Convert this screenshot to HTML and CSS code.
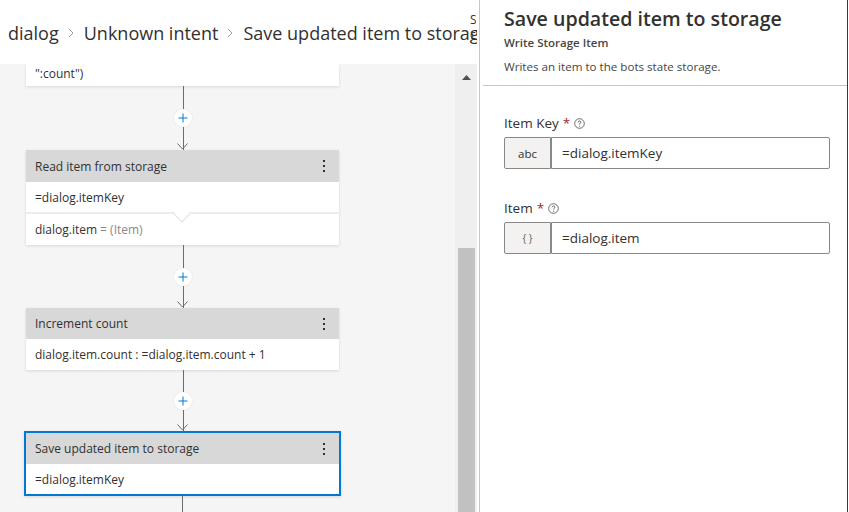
FILE: index.html
```html
<!DOCTYPE html>
<html lang="en">
<head>
<meta charset="utf-8">
<title>Save updated item to storage</title>
<link rel="stylesheet" href="styles.css">
</head>
<body>
<div class="app">
  <section class="left">
    <header class="topbar">
      <nav class="crumbs">
        <svg class="chev chev-first" width="6" height="10" viewBox="0 0 6 10"><path d="M1 1l4 4-4 4" fill="none" stroke="#a19f9d" stroke-width="1"/></svg>
        <span class="crumb">dialog</span>
        <svg class="chev" width="6" height="10" viewBox="0 0 6 10"><path d="M1 1l4 4-4 4" fill="none" stroke="#a19f9d" stroke-width="1"/></svg>
        <span class="crumb">Unknown intent</span>
        <svg class="chev" width="6" height="10" viewBox="0 0 6 10"><path d="M1 1l4 4-4 4" fill="none" stroke="#a19f9d" stroke-width="1"/></svg>
        <span class="crumb">Save updated item to storage</span>
      </nav>
      <div class="squeezed">Show code</div>
    </header>
    <div class="canvas">
      <div class="flow">
        <div class="card card-cut">
          <div class="row row-cut">":count")</div>
        </div>

        <div class="connector">
          <span class="seg"></span>
          <span class="plus"><svg width="10" height="10" viewBox="0 0 10 10"><path d="M5 0.5v9M0.5 5h9" stroke="#0078d4" stroke-width="1"/></svg></span>
          <span class="seg"></span>
          <svg class="arrow" width="11" height="7" viewBox="0 0 11 7"><path d="M0.5 0.5l5 5.5 5-5.5" fill="none" stroke="#6b6b6b" stroke-width="1"/></svg>
        </div>

        <div class="card">
          <div class="card-head"><span>Read item from storage</span>
            <svg class="kebab" width="4" height="14" viewBox="0 0 4 14"><rect x="1" y="1" width="2" height="2" fill="#323130"/><rect x="1" y="6" width="2" height="2" fill="#323130"/><rect x="1" y="11" width="2" height="2" fill="#323130"/></svg>
          </div>
          <div class="row row-notched">=dialog.itemKey<span class="notch"></span></div>
          <div class="row row-second">dialog.item <span class="muted">= (Item)</span></div>
        </div>

        <div class="connector c2">
          <span class="seg"></span>
          <span class="plus"><svg width="10" height="10" viewBox="0 0 10 10"><path d="M5 0.5v9M0.5 5h9" stroke="#0078d4" stroke-width="1"/></svg></span>
          <span class="seg"></span>
          <svg class="arrow" width="11" height="7" viewBox="0 0 11 7"><path d="M0.5 0.5l5 5.5 5-5.5" fill="none" stroke="#6b6b6b" stroke-width="1"/></svg>
        </div>

        <div class="card">
          <div class="card-head head-31"><span>Increment count</span>
            <svg class="kebab" width="4" height="14" viewBox="0 0 4 14"><rect x="1" y="1" width="2" height="2" fill="#323130"/><rect x="1" y="6" width="2" height="2" fill="#323130"/><rect x="1" y="11" width="2" height="2" fill="#323130"/></svg>
          </div>
          <div class="row row-31">dialog.item.count : =dialog.item.count + 1</div>
        </div>

        <div class="connector c3">
          <span class="seg"></span>
          <span class="plus"><svg width="10" height="10" viewBox="0 0 10 10"><path d="M5 0.5v9M0.5 5h9" stroke="#0078d4" stroke-width="1"/></svg></span>
          <span class="seg"></span>
          <svg class="arrow" width="11" height="7" viewBox="0 0 11 7"><path d="M0.5 0.5l5 5.5 5-5.5" fill="none" stroke="#6b6b6b" stroke-width="1"/></svg>
        </div>

        <div class="card card-selected">
          <div class="card-head head-30"><span>Save updated item to storage</span>
            <svg class="kebab" width="4" height="14" viewBox="0 0 4 14"><rect x="1" y="1" width="2" height="2" fill="#323130"/><rect x="1" y="6" width="2" height="2" fill="#323130"/><rect x="1" y="11" width="2" height="2" fill="#323130"/></svg>
          </div>
          <div class="row row-30">=dialog.itemKey</div>
        </div>
        <div class="tail"></div>
      </div>
      <div class="scrollbar">
        <svg class="scroll-up" width="9" height="5" viewBox="0 0 9 5"><path d="M0 5L4.5 0 9 5z" fill="#505050"/></svg>
        <div class="thumb"></div>
      </div>
    </div>
  </section>

  <aside class="panel">
    <div class="panel-head">
      <h1 class="title">Save updated item to storage</h1>
      <div class="subtitle">Write Storage Item</div>
      <p class="desc">Writes an item to the bots state storage.</p>
    </div>
    <div class="fields">
      <div class="field">
        <label class="label">Item Key <span class="req">*</span>
          <svg class="info" width="11" height="11" viewBox="0 0 11 11"><circle cx="5.5" cy="5.5" r="4.8" fill="none" stroke="#605e5c" stroke-width="0.9"/><path d="M4.1 4.3c0-0.8 0.6-1.4 1.4-1.4s1.4 0.6 1.4 1.3c0 0.9-1.3 1-1.3 2v0.3" fill="none" stroke="#605e5c" stroke-width="0.9"/><circle cx="5.6" cy="8.1" r="0.55" fill="#605e5c"/></svg>
        </label>
        <div class="input-row">
          <span class="addon">abc</span>
          <span class="input">=dialog.itemKey</span>
        </div>
      </div>
      <div class="field">
        <label class="label">Item <span class="req">*</span>
          <svg class="info" width="11" height="11" viewBox="0 0 11 11"><circle cx="5.5" cy="5.5" r="4.8" fill="none" stroke="#605e5c" stroke-width="0.9"/><path d="M4.1 4.3c0-0.8 0.6-1.4 1.4-1.4s1.4 0.6 1.4 1.3c0 0.9-1.3 1-1.3 2v0.3" fill="none" stroke="#605e5c" stroke-width="0.9"/><circle cx="5.6" cy="8.1" r="0.55" fill="#605e5c"/></svg>
        </label>
        <div class="input-row">
          <span class="addon addon-obj">{ }</span>
          <span class="input">=dialog.item</span>
        </div>
      </div>
    </div>
  </aside>
</div>
</body>
</html>
```

FILE: styles.css
```css
* { box-sizing: border-box; }
html, body { margin: 0; padding: 0; }
body {
  width: 849px;
  height: 512px;
  overflow: hidden;
  background: #ffffff;
  font-family: "Open Sans", "Noto Sans", sans-serif;
  color: #323130;
}
.app {
  display: flex;
  width: 849px;
  height: 512px;
}

/* ---------- left pane ---------- */
.left {
  width: 480px;
  flex: none;
  display: flex;
  flex-direction: column;
  padding-right: 2px;
  border-right: 1px solid #c8c6c4;
  background: #fff;
}
.topbar {
  position: relative;
  height: 64px;
  flex: none;
  display: flex;
  align-items: center;
  overflow: hidden;
}
.crumbs {
  flex: 1;
  display: flex;
  align-items: center;
  white-space: nowrap;
  overflow: hidden;
  margin-top: 1px;
  font-size: 18px;
  color: #323130;
}
.chev { flex: none; margin: 1px 10px 0 9px; }
.chev-first { margin-left: -5px; margin-right: 7px; }
.crumb { flex: none; }
.squeezed {
  position: absolute;
  left: 470px;
  top: 12px;
  width: 6px;
  overflow: hidden;
  font-size: 12px;
  line-height: 15px;
  color: #323130;
}

.canvas {
  flex: 1;
  display: flex;
  background: #f5f5f5;
  overflow: hidden;
}
.flow {
  flex: 1;
  display: flex;
  flex-direction: column;
  align-items: flex-start;
  padding-left: 26px;
}
.card {
  width: 313px;
  background: #fff;
  box-shadow: 0 1px 3px rgba(0, 0, 0, 0.12);
  font-size: 12px;
  flex: none;
}
.card-cut { height: 22px; }
.row {
  display: flex;
  align-items: center;
  padding-left: 9px;
  position: relative;
  background: #fff;
}
.row-cut { height: 19px; }
.card-head {
  height: 32px;
  background: #d8d8d8;
  display: flex;
  align-items: center;
  justify-content: space-between;
  padding: 0 13px 0 9px;
}
.head-31 { height: 31px; }
.head-30 { height: 31px; }
.kebab { display: block; }
.row-notched {
  height: 32px;
  border-bottom: 2px solid #ececec;
  z-index: 1;
}
.notch {
  position: absolute;
  left: 150px;
  bottom: -8px;
  width: 12px;
  height: 12px;
  background: #fff;
  border-right: 1px solid #e1e1e1;
  border-bottom: 1px solid #e1e1e1;
  transform: rotate(45deg);
}
.row-second { height: 31px; }
.muted { color: #8a8886; margin-left: 3px; }
.row-31 { height: 31px; }
.row-30 { height: 30px; }

.card-selected {
  width: 317px;
  margin-left: -2px;
  border: 2px solid #0078d4;
}

.connector {
  position: relative;
  width: 313px;
  height: 64px;
  display: flex;
  flex-direction: column;
  align-items: center;
  flex: none;
}
.c2 { height: 63px; }
.c3 { height: 61px; }
.seg {
  flex: 1;
  width: 1px;
  background: #6b6b6b;
  margin-left: 1px;
}
.plus {
  width: 18px;
  height: 18px;
  border-radius: 50%;
  background: #fff;
  display: flex;
  align-items: center;
  justify-content: center;
  margin-left: 1px;
  box-shadow: 0 0 2px rgba(0, 0, 0, 0.1);
}
.plus svg { display: block; }
.arrow {
  position: absolute;
  left: 151px;
  bottom: 0;
}
.tail {
  flex: 1;
  width: 1px;
  margin-left: 156px;
  background: #6b6b6b;
}

.scrollbar {
  width: 22px;
  flex: none;
  background: #efefef;
  display: flex;
  flex-direction: column;
  align-items: center;
  padding-top: 11px;
}
.scroll-up { display: block; }
.thumb {
  width: 17px;
  margin-top: 168px;
  flex: 1;
  background: #c1c1c1;
}

/* ---------- right panel ---------- */
.panel {
  flex: 1;
  border-right: 1px solid #3a3a3a;
  margin-right: 1px;
  display: flex;
  flex-direction: column;
}
.panel-head {
  margin-left: 3px;
  padding: 5px 0 10px 21px;
  border-bottom: 1px solid #c8c6c4;
}
.title {
  margin: 0;
  font-size: 19.6px;
  font-weight: 600;
  line-height: 28px;
  color: #323130;
}
.subtitle {
  margin-top: 2px;
  font-size: 11.5px;
  font-weight: 600;
  line-height: 16px;
  color: #484644;
}
.desc {
  margin: 8px 0 0;
  font-size: 11.6px;
  line-height: 16px;
  color: #484644;
}
.fields {
  padding: 27px 17px 0 24px;
  display: flex;
  flex-direction: column;
  gap: 29px;
}
.label {
  display: flex;
  align-items: center;
  font-size: 13.5px;
  line-height: 20px;
  color: #323130;
}
.req { color: #a4262c; margin: 0 4px 0 4px; }
.info { display: block; }
.input-row {
  display: flex;
  height: 32px;
  margin-top: 4px;
}
.addon {
  width: 47px;
  flex: none;
  display: flex;
  align-items: center;
  justify-content: center;
  background: #f3f2f1;
  border: 1px solid #8a8886;
  border-radius: 2px 0 0 2px;
  font-size: 11.5px;
  color: #323130;
}
.addon-obj { font-size: 10px; color: #605e5c; }
.input {
  flex: 1;
  display: flex;
  align-items: center;
  padding-left: 10px;
  border: 1px solid #8a8886;
  border-radius: 0 2px 2px 0;
  font-size: 13.5px;
  color: #323130;
}
```
